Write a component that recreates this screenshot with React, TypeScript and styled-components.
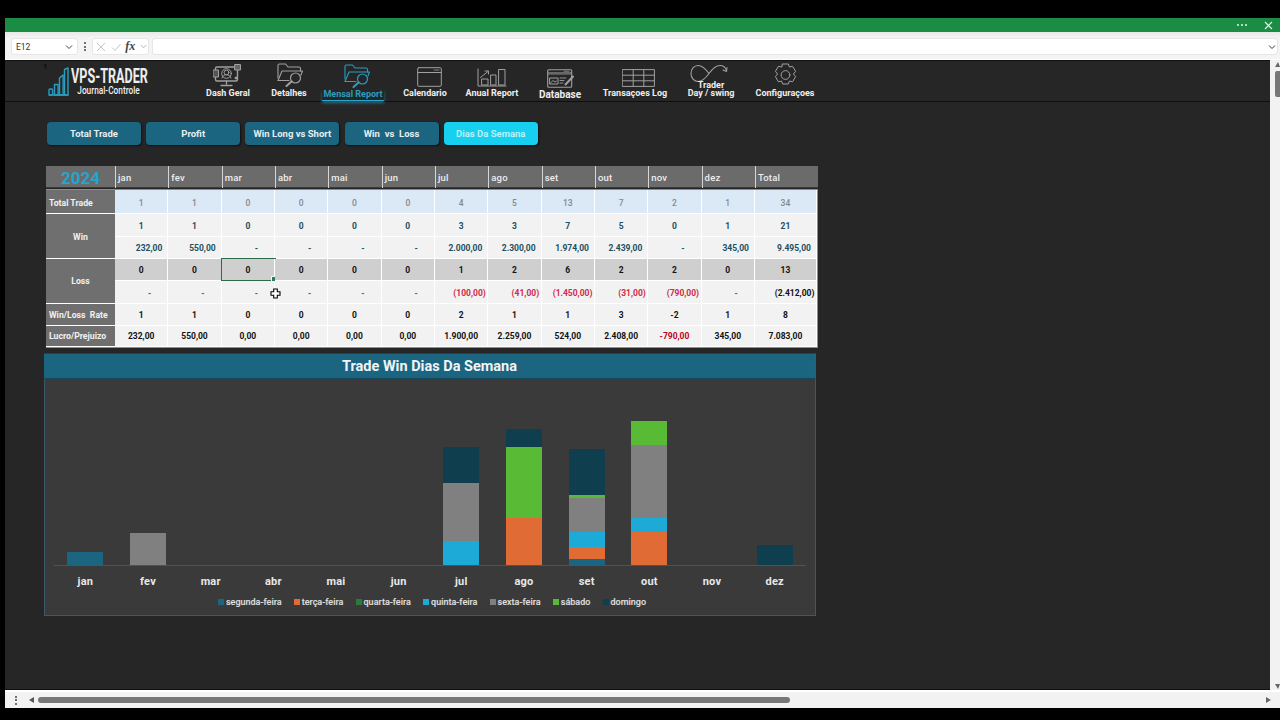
import React from 'react';
import styled, { createGlobalStyle } from 'styled-components';

const Global = createGlobalStyle`
  html, body { margin: 0; padding: 0; background: #000; }
  * { box-sizing: border-box; }
  body { font-family: Roboto, "Liberation Sans", sans-serif; }
`;

const Screen = styled.div`
  width: 1280px; height: 720px; overflow: hidden; background: #000;
  padding: 18px 0 12px 5px; display: flex; flex-direction: column;
`;
const TitleBar = styled.div`
  height: 14px; flex: none; background: #1a8c43; display: flex; align-items: center;
  justify-content: flex-end; color: #e8f5ec; padding-right: 7px; gap: 17px;
`;
const DotsH = styled.div`
  display: flex; gap: 2px;
  span { width: 2px; height: 2px; background: #e8f5ec; border-radius: 50%; }
`;
const FormulaBar = styled.div`
  height: 28px; flex: none; background: linear-gradient(#e6e9e6, #f4f4f4 6px); display: flex; align-items: center;
  padding: 2px 2px 0 6px; border-bottom: 1px solid #fff;
`;
const NameBox = styled.div`
  width: 67px; height: 17px; background: #fff; border-radius: 3px; border: 1px solid #e6e6e6;
  font-size: 8.5px; color: #333; display: flex; align-items: center; justify-content: space-between; padding: 0 4px;
`;
const DotsV = styled.div`
  width: 14px; display: flex; flex-direction: column; align-items: center; gap: 1.5px;
  span { width: 2px; height: 2px; background: #444; border-radius: 50%; }
`;
const FxBox = styled.div`
  width: 57px; height: 17px; background: #fff; border-radius: 3px; border: 1px solid #e6e6e6; margin-right: 3px;
  display: flex; align-items: center; justify-content: space-between; padding: 0 1px 0 3px; color: #bbb;
`;
const FxText = styled.span`
  font-family: "Liberation Serif", serif; font-style: italic; font-weight: 700; font-size: 12px; color: #444;
`;
const FormulaInput = styled.div`
  flex: 1; height: 17px; background: #fff; border-radius: 3px; border: 1px solid #e6e6e6;
  display: flex; align-items: center; justify-content: flex-end; padding-right: 1px; color: #333;
`;
const Middle = styled.div`
  flex: 1; min-height: 0; display: flex; background: #f2f2f2;
`;
const Sheet = styled.div`
  flex: 1; background: #262626; border-top: 1px solid #111; border-bottom: 1px solid #111; display: flex; flex-direction: column; position: relative;
`;
const VScroll = styled.div`
  width: 10px; flex: none; display: flex; flex-direction: column; align-items: flex-end; background: #f2f2f2; padding-top: 2px;
`;
const VThumb = styled.div`
  width: 5px; height: 26px; background: #777; border-radius: 2px 0 0 2px; margin-top: 4px;
`;
const TriUp = styled.div`
  width: 0; height: 0; border-left: 3.5px solid transparent; border-right: 2px solid transparent; border-bottom: 5px solid #666;
`;
const TriDown = styled(TriUp)`
  border-bottom: 0; border-top: 5px solid #666; margin-top: auto; margin-bottom: 1px;
`;
const HScroll = styled.div`
  height: 18px; flex: none; background: #f2f2f2; border-top: 2px solid #fff; display: flex; align-items: center; padding-left: 4px;
`;
const TriLeft = styled.div`
  width: 0; height: 0; border-top: 3.5px solid transparent; border-bottom: 3.5px solid transparent; border-right: 5px solid #555; margin: 0 4px 0 6px;
`;
const TriRight = styled.div`
  width: 0; height: 0; border-top: 3.5px solid transparent; border-bottom: 3.5px solid transparent; border-left: 5px solid #666; margin-left: auto; margin-right: 9px;
`;
const HThumb = styled.div`
  width: 752px; height: 6px; background: #777; border-radius: 3px;
`;

/* nav */
const Nav = styled.div`
  height: 41px; flex: none; display: flex; border-bottom: 1px solid #0f0f0f; position: relative;
`;
const RowOne = styled.span`
  position: absolute; left: 38px; top: 1px; font-size: 8px; color: #0c0c0c; font-weight: 700;
`;
const Logo = styled.div`
  width: 193px; flex: none; display: flex; padding: 6px 0 0 43px; gap: 1px; color: #2a9ec0;
`;
const LogoText = styled.div`
  width: 78px; display: flex; flex-direction: column; align-items: center; color: #eee; font-family: Roboto, sans-serif; font-weight: 700;
`;
const LogoTitle = styled.span`
  font-size: 20.5px; line-height: 18px; white-space: nowrap; transform: scaleX(.615); flex: none;
`;
const LogoSub = styled.span`
  font-size: 10.5px; line-height: 11px; font-weight: 500; white-space: nowrap; transform: scaleX(.79); flex: none;
`;
const NavItem = styled.div<{ $w: number; $active?: boolean; $drop?: number }>`
  width: ${p => p.$w}px; flex: none; display: flex; flex-direction: column; align-items: center; justify-content: flex-end;
  padding-bottom: ${p => 3 - (p.$drop || 0)}px; color: ${p => (p.$active ? '#2a9ec0' : '#a0a0a0')};
`;
const NavIcon = styled.div<{ $dx?: number }>`
  display: flex; margin-left: ${p => (p.$dx || 0) * 2}px;
`;
const NavLabel = styled.span<{ $active?: boolean; $size?: number }>`
  font-size: ${p => p.$size || 9}px; font-weight: 700; line-height: 9px; white-space: nowrap;
  color: ${p => (p.$active ? '#2a9ec0' : '#efefef')}; text-align: center; margin-top: 2px;
  ${p => p.$active ? 'border-bottom: 1.5px solid #2aa8cc; box-shadow: 0 2px 3px rgba(42,168,204,.55); padding: 0 1px 1px; margin-bottom: -3px;' : ''}
`;
const TraderLine = styled(NavLabel)`
  margin-top: -2px; position: relative;
`;
const SwingLine = styled(NavLabel)`
  margin-top: -1px;
`;

/* content */
const Content = styled.div`
  flex: 1; padding: 20px 0 0 41px; display: flex; flex-direction: column; align-items: flex-start;
`;
const Buttons = styled.div`
  display: flex; gap: 5.2px; height: 23px; flex: none; margin-left: 1px;
`;
const TabBtn = styled.div<{ $active?: boolean }>`
  width: 94px; height: 23px; border-radius: 4px; background: ${p => (p.$active ? '#17cfee' : '#1c6580')};
  color: ${p => (p.$active ? '#b9f2fa' : '#e8eef0')}; font-size: 9.5px; font-weight: 700; display: flex; align-items: center; justify-content: center;
  box-shadow: 1px 1px 2px rgba(0,0,0,.6); white-space: pre;
`;
const TableWrap = styled.div`
  margin-top: 21px; width: 772px; flex: none;
`;
const HeadRow = styled.div`
  display: grid; grid-template-columns: 69px repeat(12, 53.33px) 63px; height: 22px; background: #6b6b6b; border-bottom: 1px solid #3a3a3a;
`;
const Year = styled.div`
  color: #24a5d0; font-weight: 700; font-size: 17px; display: flex; align-items: center; justify-content: center; padding-top: 2px;
`;
const HeadCell = styled.div`
  color: #eee; font-size: 9.5px; font-weight: 500; padding: 0.5px 0 0 2px; border-left: 1px solid #d5d5d5; display: flex; align-items: center; letter-spacing: .2px;
`;
const Body = styled.div`
  margin-top: 1px; display: grid; grid-template-columns: 69px repeat(12, 53.33px) 62px;
  grid-template-rows: 24px 23px 22px 22px 23px 22px 21px; border-top: 1px solid #8d8d8d; border-right: 1px solid #8d8d8d; border-bottom: 1px solid #8d8d8d; background: #f2f2f2;
  width: 772px;
`;
const LabelCell = styled.div<{ $span?: number; $center?: boolean; $top?: number }>`
  grid-row: span ${p => p.$span || 1}; background: #6f6f6f; color: #f1f1f1; font-size: 8.7px; font-weight: 700;
  border-bottom: 1px solid #fff; display: flex; align-items: center; white-space: pre;
  justify-content: ${p => (p.$center ? 'center' : 'flex-start')}; padding-left: ${p => (p.$center ? 0 : 3)}px;
  padding-top: ${p => p.$top || 0}px;
`;
type Kind = 'total' | 'win' | 'amt' | 'loss' | 'lossAmt' | 'plain';
const rowBg: Record<Kind, string> = { total: '#dbe8f5', win: '#f2f2f2', amt: '#f2f2f2', loss: '#cfcfcf', lossAmt: '#f2f2f2', plain: '#f2f2f2' };
const rowFg: Record<Kind, string> = { total: '#7f8a92', win: '#1d4f60', amt: '#1d4f60', loss: '#111', lossAmt: '#d02a48', plain: '#111' };
const rowTop: Record<Kind, number> = { total: 2, win: 2, amt: 1, loss: 1, lossAmt: 1, plain: 0 };
const Cell = styled.div<{ $kind: Kind; $right?: number; $color?: string; $dash?: boolean }>`
  background: ${p => rowBg[p.$kind]}; color: ${p => p.$color || rowFg[p.$kind]};
  font-size: 8.5px; font-weight: ${p => (p.$kind === 'total' ? 500 : 700)}; border-right: 1px solid #fff; border-bottom: 1px solid #fff;
  display: flex; align-items: center; white-space: nowrap; position: relative;
  justify-content: ${p => (p.$right !== undefined ? 'flex-end' : 'center')};
  padding-right: ${p => p.$right || 0}px; padding-top: ${p => (p.$dash ? 2 : rowTop[p.$kind])}px;
`;
const Selected = styled.div`
  position: absolute; inset: -1px -2px -1px -1px; border: 1.5px solid #2b6b45; pointer-events: none;
  &::after { content: ''; position: absolute; right: -2px; bottom: -2px; width: 4px; height: 4px; background: #2f7a55; border: 1px solid #dff; }
`;
const CursorMark = styled.svg`
  position: absolute; right: -7px; bottom: -19px; z-index: 2;
`;

/* chart */
const ChartTitle = styled.div`
  margin: 5px 0 0 -2px; width: 772px; height: 26px; flex: none; background: #1c6580; color: #f0f5f7; font-size: 14.5px; font-weight: 700;
  display: flex; align-items: center; justify-content: center; border-top: 1px solid #16475a; border-bottom: 1px solid #16475a; border-right: 1px solid #2f5f70;
`;
const Chart = styled.div`
  margin-left: -2px; width: 772px; height: 237px; flex: none; background: #3a3a3a; border: 1px solid #3a5a66; border-top: 0;
  padding: 0 9px 0 9px; display: flex; flex-direction: column;
`;
const Plot = styled.div`
  height: 186.5px; flex: none; display: grid; grid-template-columns: repeat(12, 1fr); align-items: end; border-bottom: 1.5px solid #3a5a66;
`;
const Bar = styled.div`
  width: 36px; justify-self: center; display: flex; flex-direction: column;
`;
const Seg = styled.div<{ $c: string; $h: number }>`
  height: ${p => p.$h}px; background: ${p => p.$c};
`;
const Axis = styled.div`
  display: grid; grid-template-columns: repeat(12, 1fr); margin-top: 9.5px; height: 14px;
`;
const AxisLabel = styled.div`
  color: #e8e8e8; font-size: 11px; font-weight: 700; text-align: center; line-height: 14px; letter-spacing: .2px;
`;
const Legend = styled.div`
  display: flex; justify-content: center; gap: 12.2px; margin-top: 8px; padding-left: 4px;
`;
const LegendItem = styled.div`
  display: flex; align-items: center; gap: 2px; color: #dedede; font-size: 9px; font-weight: 500; white-space: nowrap; -webkit-text-stroke: .15px #dedede;
`;
const Swatch = styled.span<{ $c: string }>`
  width: 6px; height: 6px; background: ${p => p.$c};
`;

const C = { seg: '#1c6580', ter: '#e06b35', qua: '#2f7a3a', qui: '#1eaad6', sex: '#808080', sab: '#58ba35', dom: '#0f3f4f' };

type BarData = { m: string; segs?: [string, number][] };
const bars: BarData[] = [
  { m: 'jan', segs: [[C.seg, 13]] },
  { m: 'fev', segs: [[C.sex, 32]] },
  { m: 'mar' }, { m: 'abr' }, { m: 'mai' }, { m: 'jun' },
  { m: 'jul', segs: [[C.dom, 36], [C.sex, 58], [C.qui, 24]] },
  { m: 'ago', segs: [[C.dom, 18], [C.sab, 71], [C.ter, 47]] },
  { m: 'set', segs: [[C.dom, 46], [C.sab, 3], [C.sex, 34], [C.qui, 15], [C.ter, 12], [C.seg, 6]] },
  { m: 'out', segs: [[C.sab, 24], [C.sex, 73], [C.qui, 14], [C.ter, 33]] },
  { m: 'nov' },
  { m: 'dez', segs: [[C.dom, 20]] },
];
const legend: [string, string][] = [
  ['segunda-feira', C.seg], ['terça-feira', C.ter], ['quarta-feira', C.qua], ['quinta-feira', C.qui],
  ['sexta-feira', C.sex], ['sábado', C.sab], ['domingo', C.dom],
];

const heads = ['jan', 'fev', 'mar', 'abr', 'mai', 'jun', 'jul', 'ago', 'set', 'out', 'nov', 'dez', 'Total'];
const totalRow = ['1', '1', '0', '0', '0', '0', '4', '5', '13', '7', '2', '1', '34'];
const winRow = ['1', '1', '0', '0', '0', '0', '3', '3', '7', '5', '0', '1', '21'];
const winAmt = ['232,00', '550,00', '-', '-', '-', '-', '2.000,00', '2.300,00', '1.974,00', '2.439,00', '-', '345,00', '9.495,00'];
const lossRow = ['0', '0', '0', '0', '0', '0', '1', '2', '6', '2', '2', '0', '13'];
const lossAmt = ['-', '-', '-', '-', '-', '-', '(100,00)', '(41,00)', '(1.450,00)', '(31,00)', '(790,00)', '-', '(2.412,00)'];
const rate = ['1', '1', '0', '0', '0', '0', '2', '1', '1', '3', '-2', '1', '8'];
const lucro = ['232,00', '550,00', '0,00', '0,00', '0,00', '0,00', '1.900,00', '2.259,00', '524,00', '2.408,00', '-790,00', '345,00', '7.083,00'];

const S = { fill: 'none', stroke: 'currentColor', strokeWidth: 1, strokeLinejoin: 'round' as const, strokeLinecap: 'round' as const };

const LogoIcon = () => (
  <svg width="21" height="29" viewBox="0 0 21 29" {...S} strokeWidth={1.4}>
    <rect x="1" y="22" width="3.6" height="6" rx="1" />
    <path d="M6.5 28V17.5h3.6V28z" />
    <path d="M11.5 28V11l3.6-3V28z" />
    <path d="M16.5 28V2.5L20 1V28z" />
    <path d="M1 28h19" />
  </svg>
);
const DashIcon = () => (
  <svg width="28" height="23" viewBox="0 0 28 23" {...S}>
    <rect x="2.5" y="3" width="22" height="14" rx="1.5" strokeWidth={1.4} />
    <circle cx="13.5" cy="8.5" r="2.4" />
    <path d="M9 14c.6-2.4 2.4-3.3 4.5-3.3s3.9.9 4.5 3.3" />
    <circle cx="13.5" cy="9.5" r="4.8" />
    <rect x="0.5" y="6" width="5" height="7" fill="#555" />
    <rect x="22" y="0.5" width="5.5" height="5.5" fill="#666" />
    <circle cx="23" cy="14" r="1" fill="#ddd" />
    <path d="M13.5 17v3M8 21.5h11" strokeWidth={1.3} />
  </svg>
);
const FolderIcon = () => (
  <svg width="27" height="24" viewBox="0 0 27 24" {...S} strokeWidth={1.1}>
    <path d="M1 15V2.5C1 1.6 1.6 1 2.5 1h6l2.5 3h11c.9 0 1.5.6 1.5 1.5V8" />
    <path d="M1 17.5 5 8h20.5L24 12" />
    <path d="M1 17.5h11" />
    <circle cx="18.5" cy="15" r="5" strokeWidth={1.2} />
    <path d="M14.5 18.5 9.5 23" strokeWidth={2} />
  </svg>
);
const CalIcon = () => (
  <svg width="25" height="20" viewBox="0 0 25 20" {...S}>
    <rect x="0.7" y="0.7" width="23.6" height="18.6" rx="1" />
    <path d="M1 5.5h23" />
    <path d="M17 3h5" strokeWidth={.8} />
  </svg>
);
const AnnualIcon = () => (
  <svg width="30" height="19" viewBox="0 0 30 19" {...S}>
    <path d="M1 1v17h28" />
    <rect x="5" y="11" width="6" height="6" />
    <rect x="14" y="7" width="5" height="10" />
    <rect x="22" y="1.5" width="6" height="15.5" />
    <path d="M3.5 9.5 11 3.5M8 3h3.5v3" />
  </svg>
);
const DbIcon = () => (
  <svg width="27" height="19" viewBox="0 0 27 19" {...S}>
    <rect x="0.7" y="0.7" width="24" height="17.6" rx="1" strokeWidth={1.1} />
    <path d="M1 3.8h23.5M1 5h23.5M17 2.2h5" strokeWidth={.8} />
    <rect x="3" y="9" width="8" height="6" />
    <path d="M3.5 14l2.5-2.5 2 1.5 1.5-1M13 9h6M13 11.5h4M13 14h3" strokeWidth={.9} />
    <path d="M18.5 15.5 26 7.5" strokeWidth={2} />
  </svg>
);
const TableIcon = () => (
  <svg width="33" height="18" viewBox="0 0 33 18" {...S}>
    <rect x="0.6" y="0.6" width="31.8" height="16.8" />
    <path d="M0.6 6.2h31.8M0.6 11.8h31.8M11.2 0.6v16.8M21.8 0.6v16.8" />
  </svg>
);
const InfinityIcon = () => (
  <svg width="38" height="19" viewBox="0 0 38 19" {...S} strokeWidth={1.1}>
    <path d="M19 9.5C15 4 11.5 1.5 8 1.5 4 1.5 1 5 1 9.5s3 8 7 8c3.5 0 7-2.5 11-8 4-5.5 7.5-8 11-8 3 0 5.5 2 6.5 5" />
    <path d="M37 3.5 36.5 7.5 33 6" />
  </svg>
);
const GearIcon = () => (
  <svg width="27" height="24" viewBox="0 0 27 24" {...S}>
    <circle cx="13.5" cy="12" r="4.4" />
    <path d="M10.6 1h5.8l1 3 3.2-.7 3 5.1-2.2 2.6 2.2 2.6-3 5.2-3.2-.8-1 3h-5.8l-1-3-3.2.8-3-5.2L5.6 11 3.4 8.4l3-5.1 3.2.7z" />
  </svg>
);
const Chevron = ({ size = 8, color = 'currentColor' }: { size?: number; color?: string }) => (
  <svg width={size} height={size} viewBox="0 0 8 8" fill="none" stroke={color} strokeWidth="1"><path d="M1 2.5 4 5.5 7 2.5" /></svg>
);

const Row = ({ kind, values, right, sel, colorAt }: { kind: Kind; values: string[]; right?: (v: string, i: number) => number | undefined; sel?: number; colorAt?: (v: string, i: number) => string | undefined }) => (
  <>
    {values.map((v, i) => (
      <Cell key={i} $kind={kind} $dash={kind === 'lossAmt' && v === '-'} $right={right ? right(v, i) : undefined} $color={colorAt ? colorAt(v, i) : undefined}>
        {v}
        {sel === i && (
          <>
            <Selected />
            <CursorMark width="11" height="11" viewBox="0 0 11 11">
              <path d="M3.7 1h3.6v2.7H10v3.6H7.3V10H3.7V7.3H1V3.7h2.7z" fill="#fff" stroke="#000" strokeWidth="1.1" />
            </CursorMark>
          </>
        )}
      </Cell>
    ))}
  </>
);

export default function App() {
  const winRight = (v: string) => (v === '-' ? 16 : 5);
  const lossRight = (v: string) => (v === '-' ? 16 : 1.5);
  return (
    <Screen>
      <Global />
      <TitleBar>
        <DotsH><span /><span /><span /></DotsH>
        <svg width="9" height="9" viewBox="0 0 9 9" stroke="#e8f5ec" strokeWidth="1.2"><path d="M1 1l7 7M8 1 1 8" /></svg>
      </TitleBar>
      <FormulaBar>
        <NameBox>E12<Chevron color="#444" /></NameBox>
        <DotsV><span /><span /><span /></DotsV>
        <FxBox>
          <svg width="10" height="10" viewBox="0 0 10 10" stroke="#c4c4c4" fill="none"><path d="M1 1l8 8M9 1 1 9" /></svg>
          <svg width="10" height="10" viewBox="0 0 10 10" stroke="#c4c4c4" fill="none"><path d="M1 5.5 4 8.5 9.5 2" /></svg>
          <FxText>fx</FxText>
          <Chevron size={7} color="#aaa" />
        </FxBox>
        <FormulaInput><Chevron color="#333" /></FormulaInput>
      </FormulaBar>
      <Middle>
        <Sheet>
          <Nav>
            <RowOne>1</RowOne>
            <Logo>
              <LogoIcon />
              <LogoText>
                <LogoTitle>VPS-TRADER</LogoTitle>
                <LogoSub>Journal-Controle</LogoSub>
              </LogoText>
            </Logo>
            <NavItem $w={60}><NavIcon $dx={-1}><DashIcon /></NavIcon><NavLabel>Dash Geral</NavLabel></NavItem>
            <NavItem $w={62}><NavIcon $dx={1.5}><FolderIcon /></NavIcon><NavLabel>Detalhes</NavLabel></NavItem>
            <NavItem $w={66} $active><NavIcon $dx={4}><FolderIcon /></NavIcon><NavLabel $active>Mensal Report</NavLabel></NavItem>
            <NavItem $w={78}><NavIcon $dx={4}><CalIcon /></NavIcon><NavLabel>Calendario</NavLabel></NavItem>
            <NavItem $w={56}><NavIcon><AnnualIcon /></NavIcon><NavLabel>Anual Report</NavLabel></NavItem>
            <NavItem $w={80} $drop={1}><NavIcon><DbIcon /></NavIcon><NavLabel $size={10}>Database</NavLabel></NavItem>
            <NavItem $w={70}><NavIcon $dx={3}><TableIcon /></NavIcon><NavLabel>Transaçoes Log</NavLabel></NavItem>
            <NavItem $w={82}>
              <NavIcon $dx={-2.5}><InfinityIcon /></NavIcon>
              <TraderLine>Trader</TraderLine>
              <SwingLine>Day / swing</SwingLine>
            </NavItem>
            <NavItem $w={66}><NavIcon><GearIcon /></NavIcon><NavLabel>Configuraçoes</NavLabel></NavItem>
          </Nav>
          <Content>
            <Buttons>
              <TabBtn>Total Trade</TabBtn>
              <TabBtn>Profit</TabBtn>
              <TabBtn>Win Long vs Short</TabBtn>
              <TabBtn>{'Win  vs  Loss'}</TabBtn>
              <TabBtn $active>Dias Da Semana</TabBtn>
            </Buttons>
            <TableWrap>
              <HeadRow>
                <Year>2024</Year>
                {heads.map(h => <HeadCell key={h}>{h}</HeadCell>)}
              </HeadRow>
              <Body>
                <LabelCell $top={2}>Total Trade</LabelCell>
                <Row kind="total" values={totalRow} />
                <LabelCell $span={2} $center $top={1}>Win</LabelCell>
                <Row kind="win" values={winRow} />
                <Row kind="amt" values={winAmt} right={winRight} />
                <LabelCell $span={2} $center>Loss</LabelCell>
                <Row kind="loss" values={lossRow} sel={2} />
                <Row kind="lossAmt" values={lossAmt} right={lossRight} colorAt={(_, i) => (i === 12 ? '#111' : undefined)} />
                <LabelCell>{'Win/Loss  Rate'}</LabelCell>
                <Row kind="plain" values={rate} />
                <LabelCell>Lucro/Prejuizo</LabelCell>
                <Row kind="plain" values={lucro} colorAt={v => (v.startsWith('-') ? '#c00020' : undefined)} />
              </Body>
            </TableWrap>
            <ChartTitle>Trade Win Dias Da Semana</ChartTitle>
            <Chart>
              <Plot>
                {bars.map(b => (
                  <Bar key={b.m}>
                    {(b.segs || []).map(([c, h], i) => <Seg key={i} $c={c} $h={h} />)}
                  </Bar>
                ))}
              </Plot>
              <Axis>
                {bars.map(b => <AxisLabel key={b.m}>{b.m}</AxisLabel>)}
              </Axis>
              <Legend>
                {legend.map(([t, c]) => (
                  <LegendItem key={t}><Swatch $c={c} />{t}</LegendItem>
                ))}
              </Legend>
            </Chart>
          </Content>
        </Sheet>
        <VScroll>
          <TriUp />
          <VThumb />
          <TriDown />
        </VScroll>
      </Middle>
      <HScroll>
        <DotsV><span /><span /><span /></DotsV>
        <TriLeft />
        <HThumb />
        <TriRight />
      </HScroll>
    </Screen>
  );
}
